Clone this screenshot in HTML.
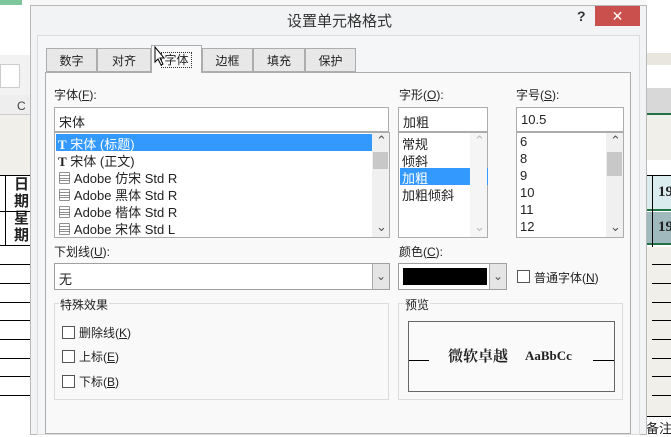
<!DOCTYPE html>
<html><head><meta charset="utf-8"><style>
*{margin:0;padding:0;box-sizing:border-box}
body{width:671px;height:433px;overflow:hidden;position:relative;background:#fff;font-family:"Liberation Sans","Noto Sans CJK SC",sans-serif;font-size:12px;color:#222}
.a{position:absolute}
.box{position:absolute;background:#fff;border:1px solid #acacac}
.t{position:absolute;white-space:nowrap}
.cb{position:absolute;width:13px;height:13px;border:1px solid #555;background:#fff}
.sb{position:absolute;right:0;top:0;bottom:0;width:17px;background:#f0f0f0}
.ln{position:absolute;height:1px;background:#000}
.lst .t{font-size:13px}
u{text-decoration:underline}
</style></head><body>
<div class="a" style="left:0;top:0;width:30px;height:433px;background:#fff"></div>
<div class="a" style="left:0;top:0;width:22px;height:5px;background:#7ec79a"></div>
<div class="a" style="left:0;top:55px;width:30px;height:40px;background:#f2f2f2"></div>
<div class="a" style="left:0;top:64px;width:20px;height:24px;background:#fff;border:1px solid #ccc"></div>
<div class="a" style="left:0;top:95px;width:30px;height:20px;background:#eee;border-bottom:1px solid #ccc"></div>
<div class="t" style="left:17px;top:99px;font-size:12px;color:#444">C</div>
<div class="a" style="left:0;top:115px;width:30px;height:60px;background:#f0efea"></div>
<div class="a" style="left:5px;top:175px;width:1px;height:70px;background:#000"></div>
<div class="t" style="left:14px;top:176px;font-size:15px;font-weight:bold;line-height:17px">日<br>期<br>星<br>期</div>
<div class="ln" style="left:0;top:175px;width:30px"></div>
<div class="ln" style="left:0;top:211px;width:30px"></div>
<div class="ln" style="left:0;top:245px;width:30px"></div>
<div class="ln" style="left:0;top:264px;width:30px"></div>
<div class="ln" style="left:0;top:283px;width:30px"></div>
<div class="ln" style="left:0;top:302px;width:30px"></div>
<div class="ln" style="left:0;top:320px;width:30px"></div>
<div class="ln" style="left:0;top:339px;width:30px"></div>
<div class="ln" style="left:0;top:358px;width:30px"></div>
<div class="ln" style="left:0;top:376px;width:30px"></div>
<div class="ln" style="left:0;top:395px;width:30px"></div>
<div class="a" style="left:646px;top:0;width:25px;height:433px;background:#fff"></div>
<div class="a" style="left:646px;top:53px;width:25px;height:12px;background:#e8e6df"></div>
<div class="a" style="left:646px;top:88px;width:25px;height:27px;background:#d8d8d8;border-bottom:2px solid #217346"></div>
<div class="a" style="left:646px;top:115px;width:25px;height:45px;background:#f0efea"></div>
<div class="a" style="left:646px;top:175px;width:25px;height:36px;background:#dbecee;border-top:1px solid #000;border-bottom:2px solid #217346"></div>
<div class="a" style="left:646px;top:212px;width:25px;height:33px;background:#9fb9bd;border-bottom:2px solid #217346"></div>
<div class="t" style="left:658px;top:184px;font-size:15px;font-weight:bold;font-family:'Liberation Serif',serif">19</div>
<div class="t" style="left:658px;top:219px;font-size:15px;font-weight:bold;font-family:'Liberation Serif',serif">19</div>
<div class="a" style="left:652px;top:175px;width:1px;height:242px;background:#000"></div>
<div class="a" style="left:646px;top:247px;width:25px;height:170px;background:#f0efea"></div>
<div class="ln" style="left:652px;top:264px;width:19px"></div>
<div class="ln" style="left:652px;top:283px;width:19px"></div>
<div class="ln" style="left:652px;top:302px;width:19px"></div>
<div class="ln" style="left:652px;top:320px;width:19px"></div>
<div class="ln" style="left:652px;top:339px;width:19px"></div>
<div class="ln" style="left:652px;top:358px;width:19px"></div>
<div class="ln" style="left:652px;top:376px;width:19px"></div>
<div class="ln" style="left:652px;top:395px;width:19px"></div>
<div class="ln" style="left:646px;top:416px;width:25px"></div>
<div class="t" style="left:646px;top:418px;font-size:13px">备注</div>
<div class="a" style="left:30px;top:0;width:616px;height:6px;background:#f7f7f7;border-bottom:1px solid #ccc"></div>
<div class="a" style="left:30px;top:5px;width:617px;height:430px;background:#f2f3f4;border:1px solid #b9b9b9"></div>
<div class="t" style="left:287px;top:10px;font-size:15px;color:#333">设置单元格格式</div>
<div class="t" style="left:577px;top:8px;font-size:14px;font-weight:bold;color:#333">?</div>
<div class="a" style="left:595px;top:6px;width:45px;height:20px;background:#c9504d;color:#fff;text-align:center;font-size:14px;line-height:20px">✕</div>
<div class="a" style="left:37px;top:35px;width:603px;height:400px;background:#f5f6f7;border:1px solid #dcdcdc"></div>
<div class="a" style="left:45px;top:72px;width:586px;height:362px;background:#f9f9f9;border:1px solid #adadad"></div>
<div class="a" style="left:46px;top:48px;width:51px;height:24px;background:#e8e8e8;border:1px solid #adadad;text-align:center;line-height:24px">数字</div>
<div class="a" style="left:97px;top:48px;width:54px;height:24px;background:#e8e8e8;border:1px solid #adadad;text-align:center;line-height:24px">对齐</div>
<div class="a" style="left:151px;top:45px;width:51px;height:28px;background:#f9f9f9;border:1px solid #adadad;border-bottom:none;text-align:center;line-height:28px"><span style="border:1px dotted #333;padding:0 2px">字体</span></div>
<div class="a" style="left:202px;top:48px;width:51px;height:24px;background:#e8e8e8;border:1px solid #adadad;text-align:center;line-height:24px">边框</div>
<div class="a" style="left:253px;top:48px;width:52px;height:24px;background:#e8e8e8;border:1px solid #adadad;text-align:center;line-height:24px">填充</div>
<div class="a" style="left:305px;top:48px;width:51px;height:24px;background:#e8e8e8;border:1px solid #adadad;text-align:center;line-height:24px">保护</div>
<svg class="a" style="left:154px;top:46px" width="12" height="20"><path d="M1 1 L1 16 L4 13 L7 19 L9 18 L6 12 L10 12 Z" fill="#fff" stroke="#000" stroke-width="1"/></svg>
<div class="t" style="left:54px;top:86px">字体(<u>F</u>):</div>
<div class="t" style="left:399px;top:86px">字形(<u>O</u>):</div>
<div class="t" style="left:516px;top:86px">字号(<u>S</u>):</div>
<div class="box" style="left:54px;top:107px;width:335px;height:25px"><div class="t" style="left:4px;top:4px;font-size:13px">宋体</div></div>
<div class="box lst" style="left:54px;top:132px;width:336px;height:106px">
<div class="a" style="left:1px;top:1px;width:316px;height:17px;background:#3399ff"></div>
<div class="t" style="left:3px;top:1px;color:#fff"><b style="font-family:'Liberation Serif',serif">T</b> 宋体 (标题)</div>
<div class="t" style="left:3px;top:18px"><b style="font-family:'Liberation Serif',serif">T</b> 宋体 (正文)</div>
<div class="t" style="left:3px;top:35px">&#9636; Adobe 仿宋 Std R</div>
<div class="t" style="left:3px;top:52px">&#9636; Adobe 黑体 Std R</div>
<div class="t" style="left:3px;top:69px">&#9636; Adobe 楷体 Std R</div>
<div class="t" style="left:3px;top:86px">&#9636; Adobe 宋体 Std L</div>
<div class="sb"><div class="t" style="left:4px;top:0;color:#555">&#8963;</div><div class="a" style="left:1px;top:19px;width:15px;height:17px;background:#c8c8c8"></div><div class="t" style="left:4px;top:86px;color:#555">&#8964;</div></div>
</div>
<div class="box" style="left:398px;top:107px;width:90px;height:25px"><div class="t" style="left:4px;top:4px;font-size:13px">加粗</div></div>
<div class="box lst" style="left:398px;top:132px;width:90px;height:106px">
<div class="t" style="left:3px;top:1px">常规</div>
<div class="t" style="left:3px;top:18px">倾斜</div>
<div class="a" style="left:1px;top:35px;width:88px;height:17px;background:#3399ff"></div>
<div class="t" style="left:3px;top:35px;color:#fff">加粗</div>
<div class="t" style="left:3px;top:52px">加粗倾斜</div>
<div class="sb" style="background:#f5f5f5"><div class="t" style="left:4px;top:0;color:#bbb">&#8963;</div><div class="t" style="left:4px;top:86px;color:#bbb">&#8964;</div></div>
</div>
<div class="box" style="left:516px;top:107px;width:108px;height:25px"><div class="t" style="left:4px;top:4px;font-size:13px">10.5</div></div>
<div class="box lst" style="left:516px;top:132px;width:108px;height:106px">
<div class="t" style="left:3px;top:1px">6</div>
<div class="t" style="left:3px;top:18px">8</div>
<div class="t" style="left:3px;top:35px">9</div>
<div class="t" style="left:3px;top:52px">10</div>
<div class="t" style="left:3px;top:69px">11</div>
<div class="t" style="left:3px;top:86px">12</div>
<div class="sb"><div class="t" style="left:4px;top:0;color:#555">&#8963;</div><div class="a" style="left:1px;top:19px;width:15px;height:24px;background:#c8c8c8"></div><div class="t" style="left:4px;top:86px;color:#555">&#8964;</div></div>
</div>
<div class="t" style="left:54px;top:243px">下划线(<u>U</u>):</div>
<div class="box" style="left:54px;top:263px;width:336px;height:27px;border-color:#a0a0a0"><div class="t" style="left:4px;top:5px;font-size:13px">无</div><div class="a" style="right:0;top:0;width:17px;height:25px;background:#e5e5e5;border-left:1px solid #aaa;text-align:center;line-height:24px;color:#555">&#8964;</div></div>
<div class="t" style="left:399px;top:243px">颜色(<u>C</u>):</div>
<div class="box" style="left:398px;top:263px;width:109px;height:27px;border-color:#a0a0a0"><div class="a" style="left:4px;top:4px;width:84px;height:17px;background:#000"></div><div class="a" style="right:0;top:0;width:17px;height:25px;background:#e5e5e5;border-left:1px solid #aaa;text-align:center;line-height:24px;color:#555">&#8964;</div></div>
<div class="cb" style="left:517px;top:270px"></div>
<div class="t" style="left:534px;top:269px">普通字体(<u>N</u>)</div>
<div class="a" style="left:54px;top:303px;width:335px;height:97px;border:1px solid #dcdcdc"></div>
<div class="t" style="left:59px;top:296px;background:#f9f9f9;padding:0 1px">特殊效果</div>
<div class="cb" style="left:62px;top:326px"></div><div class="t" style="left:79px;top:324px">删除线(<u>K</u>)</div>
<div class="cb" style="left:62px;top:350px"></div><div class="t" style="left:79px;top:348px">上标(<u>E</u>)</div>
<div class="cb" style="left:62px;top:375px"></div><div class="t" style="left:79px;top:373px">下标(<u>B</u>)</div>
<div class="a" style="left:398px;top:303px;width:225px;height:97px;border:1px solid #dcdcdc"></div>
<div class="t" style="left:404px;top:296px;background:#f9f9f9;padding:0 1px">预览</div>
<div class="a" style="left:408px;top:321px;width:207px;height:71px;border:1px solid #666;background:#fafafa"></div>
<div class="a" style="left:409px;top:360px;width:20px;height:1px;background:#000"></div>
<div class="a" style="left:593px;top:360px;width:21px;height:1px;background:#000"></div>
<div class="t" style="left:448px;top:345px;font-size:15px;font-weight:bold;font-family:'Noto Serif CJK SC','Liberation Serif',serif">微软卓越</div>
<div class="t" style="left:525px;top:348px;font-size:13px;font-weight:bold;font-family:'Liberation Serif',serif">AaBbCc</div>
</body></html>
